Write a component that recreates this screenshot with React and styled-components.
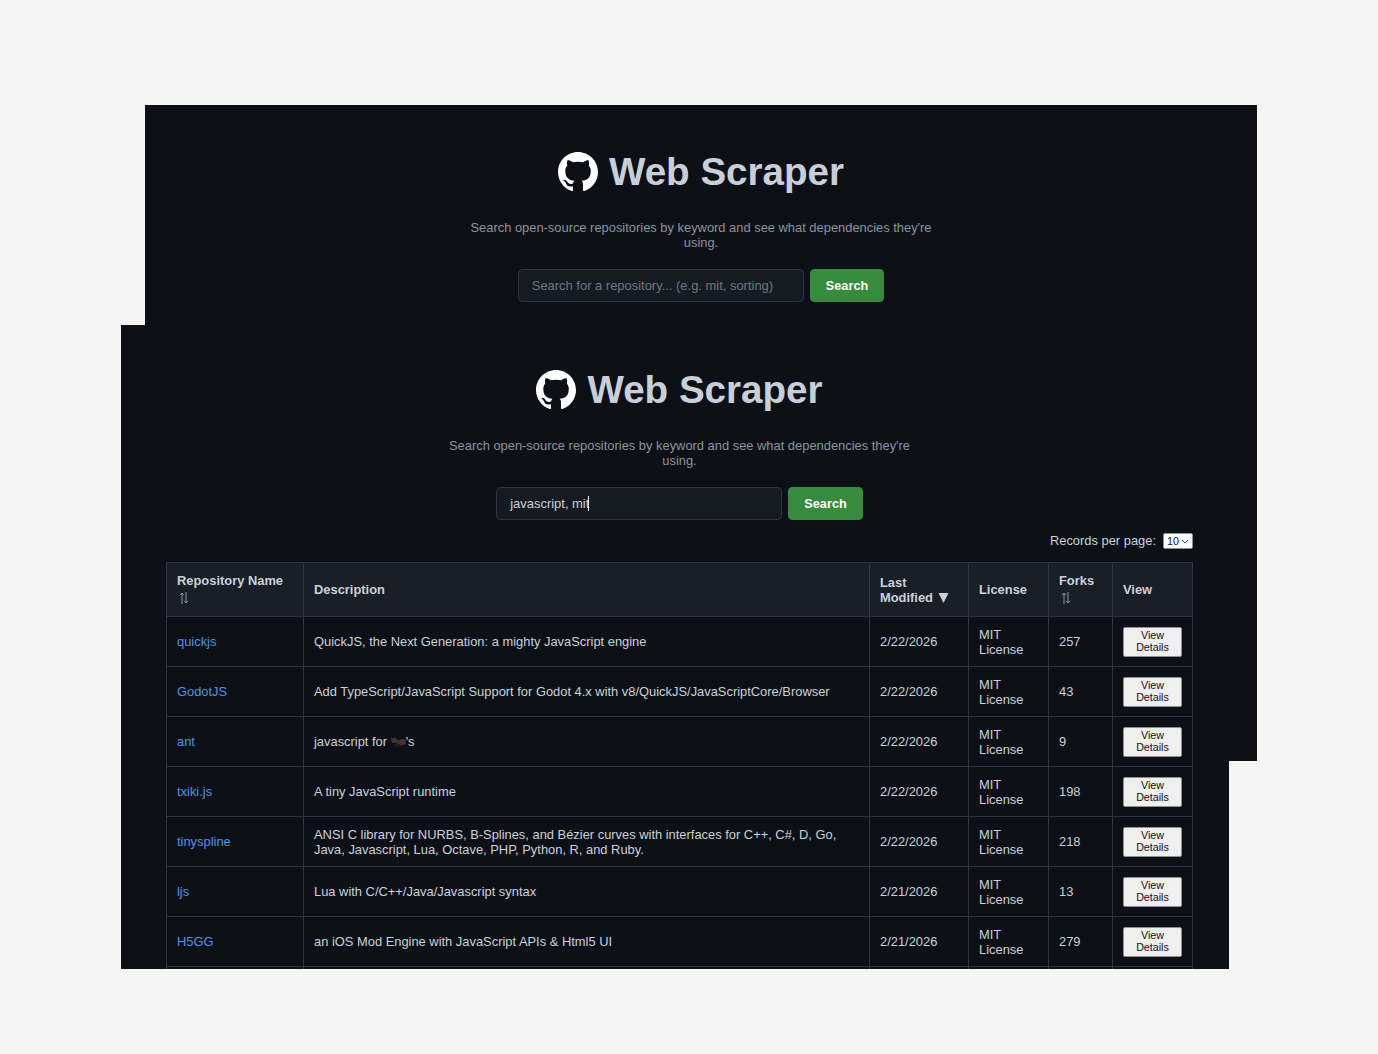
import React from "react";
import styled, { createGlobalStyle } from "styled-components";

const Global = createGlobalStyle`
  html, body { margin: 0; padding: 0; background: #f5f5f5; }
  body { font-family: "Liberation Sans", Arial, sans-serif; }
`;
const Canvas = styled.div`
  position: relative;
  width: 1378px;
  height: 1054px;
  overflow: hidden;
  background: #f5f5f5;
`;
const Window = styled.section`
  position: absolute;
  left: ${(p) => p.$x}px;
  top: ${(p) => p.$y}px;
  width: ${(p) => p.$w}px;
  height: ${(p) => p.$h}px;
  box-sizing: border-box;
  padding: 0 ${(p) => p.$pr}px 0 ${(p) => p.$pl}px;
  background: #0d1117;
  overflow: hidden;
  color: #c9d1d9;
`;
const Hero = styled.header`
  display: flex;
  flex-direction: column;
  align-items: center;
  padding-top: ${(p) => p.$top}px;
`;
const TitleRow = styled.div`
  display: flex;
  align-items: center;
  gap: 11px;
  height: 40px;
`;
const Mark = styled.svg`
  width: 40px;
  height: 40px;
  fill: #fff;
  flex: none;
`;
const Title = styled.h1`
  margin: 0;
  font-size: 38.6px;
  line-height: 40px;
  font-weight: 700;
  color: #c9cfd9;
`;
const Lead = styled.p`
  margin: 28px 0 0;
  width: 480px;
  font-size: 12.9px;
  line-height: 15px;
  color: #8b949e;
  text-align: center;
`;
const SearchRow = styled.div`
  display: flex;
  gap: 6px;
  margin-top: 19px;
`;
const Field = styled.div`
  box-sizing: border-box;
  width: 286px;
  height: 33px;
  display: flex;
  align-items: center;
  padding: 0 13px;
  background: #161b22;
  border: 1px solid #30363d;
  border-radius: 4.5px;
  font-size: 12.95px;
  color: ${(p) => (p.$placeholder ? "#6e7681" : "#c9d1d9")};
`;
const Caret = styled.span`
  display: inline-block;
  width: 1px;
  height: 15px;
  margin-left: -1px;
  background: #e6edf3;
`;
const SearchButton = styled.button`
  width: 74.5px;
  height: 33px;
  border: 0;
  border-radius: 4.5px;
  background: #388a3c;
  color: #fff;
  font: 700 12.6px "Liberation Sans", Arial, sans-serif;
  letter-spacing: 0.1px;
`;
const Pager = styled.div`
  display: flex;
  justify-content: flex-end;
  align-items: center;
  gap: 7px;
  height: 16px;
  margin-top: 13px;
`;
const PagerLabel = styled.span`
  padding-bottom: 2px;
  font-size: 12.9px;
  color: #c9d1d9;
`;
const Select = styled.select`
  box-sizing: border-box;
  appearance: none;
  width: 30px;
  height: 16px;
  padding: 0 0 0 3px;
  font: 10.6px "Liberation Sans", Arial, sans-serif;
  color: #111;
  border: 1px solid #8f8f8f;
  border-radius: 2px;
  background: #fff url("data:image/svg+xml,%3Csvg xmlns='http://www.w3.org/2000/svg' width='8' height='5'%3E%3Cpath d='M1 1l3 3 3-3' fill='none' stroke='%23333' stroke-width='.9'/%3E%3C/svg%3E") no-repeat right 3px center;
`;
const Table = styled.table`
  width: 1026px;
  margin-top: 13px;
  table-layout: fixed;
  border-collapse: collapse;
  font-size: 12.9px;
  line-height: 15px;
  color: #c9d1d9;
`;
const Th = styled.th`
  box-sizing: border-box;
  height: 54px;
  padding: 0 10px;
  text-align: left;
  vertical-align: middle;
  font-weight: 700;
  font-size: 12.9px;
  background: #1a1e26;
  border: 1px solid #30363d;
`;
const Td = styled.td`
  box-sizing: border-box;
  height: 50px;
  padding: 0 10px;
  vertical-align: middle;
  border: 1px solid #30363d;
`;
const Repo = styled.a`
  color: #4f94e0;
  text-decoration: none;
`;
const SortIcon = styled.svg`
  display: block;
  width: 10px;
  height: 12px;
  margin: 4px 0 2px 2px;
  fill: none;
  stroke: #8b949e;
  stroke-width: 1;
`;
const Arrow = styled.svg`
  display: inline-block;
  width: 11px;
  height: 10px;
  margin-left: 1px;
  vertical-align: -1px;
  fill: #c9d1d9;
`;
const Ant = styled.svg`
  display: inline-block;
  width: 15px;
  height: 10px;
  vertical-align: -1px;
  fill: #4a342c;
  stroke: #4a342c;
  stroke-width: 0.7;
`;
const ViewButton = styled.button`
  box-sizing: border-box;
  display: block;
  width: 59px;
  height: 30px;
  padding: 0 0 2px;
  border: 1px solid #8f8f8f;
  border-radius: 2px;
  background: #efefef;
  color: #111;
  font: 10.7px/12px "Liberation Sans", Arial, sans-serif;
`;

const octo =
  "M8 0C3.58 0 0 3.58 0 8c0 3.54 2.29 6.53 5.47 7.59.4.07.55-.17.55-.38 0-.19-.01-.82-.01-1.49-2.01.37-2.53-.49-2.69-.94-.09-.23-.48-.94-.82-1.13-.28-.15-.68-.52-.01-.53.63-.01 1.08.58 1.23.82.72 1.21 1.87.87 2.33.66.07-.52.28-.87.51-1.07-1.78-.2-3.64-.89-3.64-3.95 0-.87.31-1.59.82-2.15-.08-.2-.36-1.02.08-2.12 0 0 .67-.21 2.2.82.64-.18 1.32-.27 2-.27s1.36.09 2 .27c1.53-1.04 2.2-.82 2.2-.82.44 1.1.16 1.92.08 2.12.51.56.82 1.27.82 2.15 0 3.07-1.87 3.75-3.65 3.95.29.25.54.73.54 1.48 0 1.07-.01 1.93-.01 2.2 0 .21.15.46.55.38A8.01 8.01 0 0 0 16 8c0-4.42-3.58-8-8-8z";

const HeroBlock = ({ top, value }) => (
  <Hero $top={top}>
    <TitleRow>
      <Mark viewBox="0 0 16 16" aria-hidden="true">
        <path d={octo} />
      </Mark>
      <Title>Web Scraper</Title>
    </TitleRow>
    <Lead>Search open-source repositories by keyword and see what dependencies they're using.</Lead>
    <SearchRow>
      {value ? (
        <Field>
          {value}
          <Caret />
        </Field>
      ) : (
        <Field $placeholder>Search for a repository... (e.g. mit, sorting)</Field>
      )}
      <SearchButton>Search</SearchButton>
    </SearchRow>
  </Hero>
);

const Sort = () => (
  <SortIcon viewBox="0 0 10 12" aria-hidden="true">
    <path d="M3 12V1M1 3.2 3 1l2 2.2M7 0v11M5 8.8 7 11l2-2.2" />
  </SortIcon>
);

const AntGlyph = () => (
  <Ant viewBox="0 0 15 10" aria-hidden="true">
    <ellipse cx="3" cy="3.5" rx="2.6" ry="2.2" />
    <circle cx="7" cy="4.5" r="1.6" />
    <ellipse cx="11.5" cy="5" rx="3.2" ry="2.7" />
    <path d="M6 5 4 9.5M7 5.5 7 9.8M8 5l2 4.8M1 2 0 0M3 2 4 0" fill="none" />
  </Ant>
);

const rows = [
  ["quickjs", "QuickJS, the Next Generation: a mighty JavaScript engine", "2/22/2026", "257"],
  ["GodotJS", "Add TypeScript/JavaScript Support for Godot 4.x with v8/QuickJS/JavaScriptCore/Browser", "2/22/2026", "43"],
  ["ant", <>javascript for <AntGlyph />'s</>, "2/22/2026", "9"],
  ["txiki.js", "A tiny JavaScript runtime", "2/22/2026", "198"],
  ["tinyspline", "ANSI C library for NURBS, B-Splines, and Bézier curves with interfaces for C++, C#, D, Go, Java, Javascript, Lua, Octave, PHP, Python, R, and Ruby.", "2/22/2026", "218"],
  ["ljs", "Lua with C/C++/Java/Javascript syntax", "2/21/2026", "13"],
  ["H5GG", "an iOS Mod Engine with JavaScript APIs & Html5 UI", "2/21/2026", "279"],
];

export default function App() {
  return (
    <>
      <Global />
      <Canvas>
        <Window $x={145} $y={105} $w={1112} $h={656} $pl={45} $pr={45}>
          <HeroBlock top={47} />
        </Window>
        <Window $x={121} $y={325} $w={1108} $h={644} $pl={45} $pr={36}>
          <HeroBlock top={45} value="javascript, mit" />
          <Pager>
            <PagerLabel>Records per page:</PagerLabel>
            <Select defaultValue="10">
              <option>10</option>
            </Select>
          </Pager>
          <Table>
            <colgroup>
              <col width="137" />
              <col width="566" />
              <col width="99" />
              <col width="80" />
              <col width="64" />
              <col width="80" />
            </colgroup>
            <thead>
              <tr>
                <Th>Repository Name<Sort /></Th>
                <Th>Description</Th>
                <Th>
                  Last Modified{" "}
                  <Arrow viewBox="0 0 11 10" aria-hidden="true">
                    <path d="M.5 0h10L5.5 10z" />
                  </Arrow>
                </Th>
                <Th>License</Th>
                <Th>Forks<Sort /></Th>
                <Th>View</Th>
              </tr>
            </thead>
            <tbody>
              {rows.map(([name, desc, date, forks]) => (
                <tr key={name}>
                  <Td><Repo href="#">{name}</Repo></Td>
                  <Td>{desc}</Td>
                  <Td>{date}</Td>
                  <Td>MIT License</Td>
                  <Td>{forks}</Td>
                  <Td><ViewButton>View Details</ViewButton></Td>
                </tr>
              ))}
              <tr>
                <Td /><Td /><Td /><Td /><Td /><Td />
              </tr>
            </tbody>
          </Table>
        </Window>
      </Canvas>
    </>
  );
}
